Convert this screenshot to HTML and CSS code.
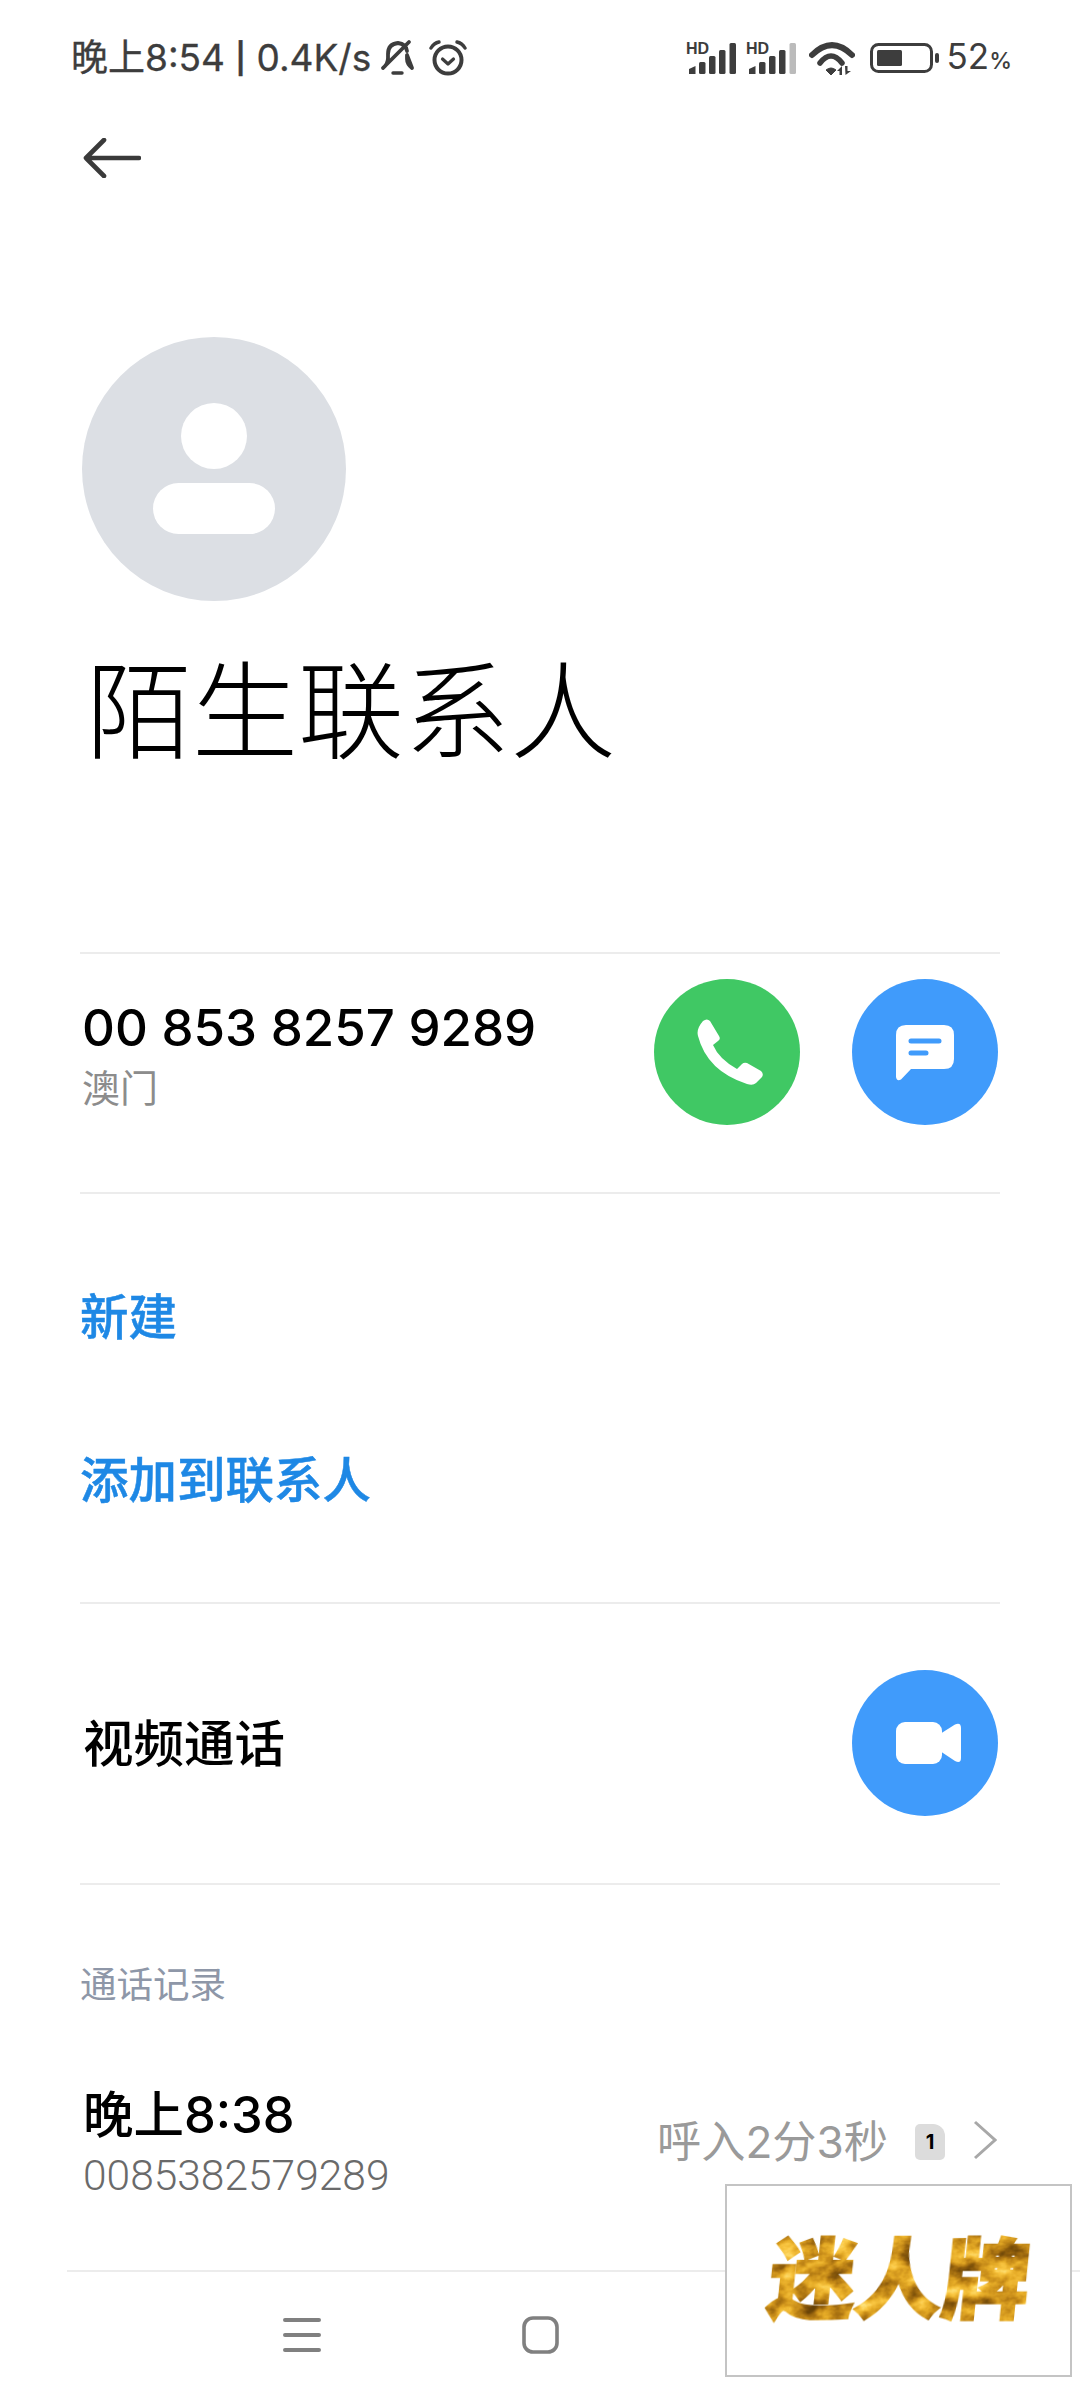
FILE: index.html
```html
<!DOCTYPE html>
<html lang="zh-CN">
<head>
<meta charset="utf-8">
<title>陌生联系人</title>
<link rel="stylesheet" href="styles.css">
</head>
<body>
<div class="screen">
  <header class="status">
    <div class="status-left">
      <span class="status-text">晚上8:54 <span class="sep">|</span> 0.4K/s</span>
      <svg class="ic-bell" viewBox="0 0 36 38"><path d="M4 29 Q9 25 9 19 L9 15 Q9 5 19 4 Q27 5 28 12 M28 16 L28 20 Q28 25 33 29 Z M4 29 L30 3" fill="none" stroke="#3d3d3d" stroke-width="3.8" stroke-linecap="round" stroke-linejoin="round"/><path d="M14 34 H23" stroke="#3d3d3d" stroke-width="3.4" stroke-linecap="round"/></svg>
      <svg class="ic-alarm" viewBox="0 0 38 36"><circle cx="19" cy="20" r="13.5" fill="none" stroke="#3d3d3d" stroke-width="4"/><path d="M13.5 19 L19 24 L24.5 19" fill="none" stroke="#3d3d3d" stroke-width="3.2" stroke-linecap="round" stroke-linejoin="round"/><path d="M2 8 Q5 3 10 2 M36 8 Q33 3 28 2" fill="none" stroke="#3d3d3d" stroke-width="3.4" stroke-linecap="round"/></svg>
    </div>
    <div class="status-right">
      <svg class="ic-signal" viewBox="0 0 50 32"><text x="0" y="12" class="hd">HD</text><path d="M3 27 L9.5 24 V32 H3 Z" fill="#3d3d3d"/><rect x="13" y="20" width="6.5" height="12" rx="1.5" fill="#3d3d3d"/><rect x="23" y="14" width="6.5" height="18" rx="1.5" fill="#3d3d3d"/><rect x="33" y="8" width="6.5" height="24" rx="1.5" fill="#3d3d3d"/><rect x="43.5" y="1" width="6.5" height="31" rx="1.5" fill="#3d3d3d"/></svg>
      <svg class="ic-signal" viewBox="0 0 50 32"><text x="0" y="12" class="hd">HD</text><path d="M3 27 L9.5 24 V32 H3 Z" fill="#3d3d3d"/><rect x="13" y="20" width="6.5" height="12" rx="1.5" fill="#3d3d3d"/><rect x="23" y="14" width="6.5" height="18" rx="1.5" fill="#3d3d3d"/><rect x="33" y="8" width="6.5" height="24" rx="1.5" fill="#3d3d3d"/><rect x="43.5" y="1" width="6.5" height="31" rx="1.5" fill="#bbbbbb"/></svg>
      <svg class="ic-wifi" viewBox="0 0 46 33"><path d="M3 13 Q23 -7 43 13" fill="none" stroke="#3d3d3d" stroke-width="6" stroke-linecap="round"/><path d="M11 21 Q22 7 33 21" fill="none" stroke="#3d3d3d" stroke-width="5.5" stroke-linecap="round"/><path d="M17 28 Q22 24 27 28 L22 33 Z" fill="#3d3d3d" stroke="#3d3d3d" stroke-linejoin="round"/><path d="M28 29 L33 24 V33 H30.5 V29 Z M36 24 H38.5 V29 H42 L36.5 33 Z" fill="#3d3d3d"/></svg>
      <svg class="ic-battery" viewBox="0 0 69 30"><rect x="1.5" y="1.5" width="60" height="27" rx="7" fill="none" stroke="#3d3d3d" stroke-width="3"/><rect x="7" y="7" width="25" height="16" rx="1.5" fill="#3d3d3d"/><rect x="65" y="10" width="4" height="10" rx="2" fill="#3d3d3d"/></svg>
      <span class="batt-text">52<span class="batt-pct">%</span></span>
    </div>
  </header>

  <main class="main">
    <div class="back-row">
      <svg class="ic-back" viewBox="0 0 58 40"><path d="M56 20 H3 M21 2 L3 20 L21 38" fill="none" stroke="#3a3a3a" stroke-width="4.6" stroke-linecap="round" stroke-linejoin="round"/></svg>
    </div>

    <section class="hero">
      <div class="avatar">
        <span class="avatar-head"></span>
        <span class="avatar-body"></span>
      </div>
      <h1 class="name">陌生联系人</h1>
    </section>

    <section class="contact">
      <div class="contact-info">
        <div class="number">00 853 8257 9289</div>
        <div class="region">澳门</div>
      </div>
      <div class="btns">
        <span class="circle green">
          <svg class="ic-phone" viewBox="0 0 66 66"><path d="M6 2 Q10 -1 13 2 L22 17 Q24 20 21 22 L16 26 Q22 40 40 50 L45 45 Q47 43 50 44 L64 52 Q67 55 65 58 L59 64 Q56 67 50 65 Q10 52 1 17 Q-1 10 6 2 Z" fill="#fff"/></svg>
        </span>
        <span class="circle blue">
          <svg class="ic-msg" viewBox="0 0 58 56"><path d="M10 0 H48 Q58 0 58 10 V34 Q58 44 48 44 H15 L5 54.5 Q1 57 0 52 V10 Q0 0 10 0 Z" fill="#fff"/><path d="M15 16 H43 M15 28 H30" stroke="#409bfb" stroke-width="5" stroke-linecap="round"/></svg>
        </span>
      </div>
    </section>

    <section class="actions">
      <div class="link">新建</div>
      <div class="link">添加到联系人</div>
    </section>

    <section class="video">
      <div class="video-label">视频通话</div>
      <span class="circle blue">
        <svg class="ic-video" viewBox="0 0 65 42"><rect width="46" height="42" rx="9" fill="#fff"/><path d="M44 12 L59 2.5 Q65 0 65 6 V36 Q65 42 59 39 L44 29 Z" fill="#fff"/></svg>
      </span>
    </section>

    <section class="history">
      <div class="history-title">通话记录</div>
      <div class="call">
        <div class="call-info">
          <div class="call-time">晚上8:38</div>
          <div class="call-num">0085382579289</div>
        </div>
        <div class="call-meta">
          <span class="call-desc">呼入2分3秒</span>
          <span class="sim">1</span>
          <svg class="ic-chevron" viewBox="0 0 24 40"><path d="M2 2 L22 20 L2 38" fill="none" stroke="#a8a8a8" stroke-width="3"/></svg>
        </div>
      </div>
    </section>
  </main>

  <nav class="nav">
    <span class="nav-item"><svg class="ic-menu" viewBox="0 0 38 36"><path d="M2 3 H36 M2 18 H36 M2 33 H36" stroke="#808080" stroke-width="4" stroke-linecap="round"/></svg></span>
    <span class="nav-item"><svg class="ic-home" viewBox="0 0 37 38"><rect x="2" y="2" width="33" height="34" rx="9" fill="none" stroke="#808080" stroke-width="3.6"/></svg></span>
  </nav>

  <aside class="watermark">
    <svg class="gold" viewBox="0 0 300 110">
      <defs>
        <filter id="goldfx" x="-5%" y="-5%" width="110%" height="110%" color-interpolation-filters="sRGB">
          <feTurbulence type="fractalNoise" baseFrequency="0.04 0.055" numOctaves="4" seed="11" result="n"/>
          <feColorMatrix in="n" type="matrix" values="1 0 0 0 0  1 0 0 0 0  1 0 0 0 0  0 0 0 0 1" result="g"/>
          <feComponentTransfer in="g" result="c">
            <feFuncR type="table" tableValues="0.38 0.42 0.58 0.76 0.90 0.98 1 1"/>
            <feFuncG type="table" tableValues="0.24 0.27 0.38 0.53 0.67 0.78 0.90 0.96"/>
            <feFuncB type="table" tableValues="0.02 0.03 0.05 0.09 0.15 0.26 0.50 0.70"/>
          </feComponentTransfer>
          <feComposite in="c" in2="SourceAlpha" operator="in"/>
        </filter>
      </defs>
      <g transform="translate(150 55) skewX(-6) translate(-150 -55)">
        <text x="20" y="87" class="gold-text" filter="url(#goldfx)">迷人牌</text>
      </g>
    </svg>
  </aside>
</div>
</body>
</html>
```
FILE: styles.css
```css
* { box-sizing: border-box; }
html, body { margin: 0; padding: 0; background: #fff; }
body { font-family: Inter, "Noto Sans CJK SC", sans-serif; color: #000; }
.screen { position: relative; width: 1080px; height: 2400px; overflow: hidden; background: #fff; }

.status { display: flex; justify-content: space-between; align-items: center; height: 116px; padding: 0 68px 0 71px; color: #3d3d3d; }
.status-left, .status-right { display: flex; align-items: center; }
.status-text { font-size: 37px; line-height: 44px; white-space: nowrap; -webkit-text-stroke: 0.3px #3d3d3d; }
.sep { font-size: 30px; font-weight: 600; vertical-align: 2px; }
.ic-bell { width: 38px; height: 38px; margin-left: 7px; }
.ic-alarm { width: 38px; height: 36px; margin-left: 13px; }
.ic-signal { width: 50px; height: 32px; margin-right: 10px; overflow: visible; }
.hd { font: 700 16px "Liberation Sans", sans-serif; fill: #3d3d3d; }
.ic-wifi { width: 46px; height: 33px; margin-left: 3px; }
.ic-battery { width: 69px; height: 30px; margin-left: 15px; }
.batt-text { font-size: 35px; line-height: 44px; margin-left: 8px; }
.batt-pct { font-size: 23px; font-weight: 500; }

.main { padding: 0 80px; }
.back-row { display: flex; align-items: center; height: 84px; padding-left: 3px; }
.ic-back { width: 58px; height: 40px; }

.hero { padding-top: 137px; border-bottom: 2px solid #ececec; }
.avatar { display: flex; flex-direction: column; align-items: center; width: 264px; height: 264px; margin-left: 2px; border-radius: 50%; background: #dcdfe4; padding-top: 66px; }
.avatar-head { width: 66px; height: 66px; border-radius: 50%; background: #fff; }
.avatar-body { width: 122px; height: 51px; margin-top: 14px; border-radius: 26px; background: #fff; }
.name { margin: 51px 0 180px; padding-left: 6px; font-size: 106px; line-height: 120px; font-weight: 300; color: #000; }

.contact { display: flex; justify-content: space-between; align-items: flex-start; height: 240px; padding: 25px 2px 0 2px; border-bottom: 2px solid #ececec; }
.contact-info { padding-top: 19px; }
.number { font-size: 51px; line-height: 60px; font-weight: 500; white-space: nowrap; }
.region { margin-top: 5px; font-size: 38px; line-height: 50px; color: #8c8c8c; }
.btns { display: flex; gap: 52px; }
.circle { display: flex; align-items: center; justify-content: center; flex: none; width: 146px; height: 146px; border-radius: 50%; }
.green { background: #40c864; }
.blue { background: #409bfb; }
.ic-phone { width: 66px; height: 66px; margin-left: 6px; }
.ic-msg { width: 58px; height: 56px; margin-top: 2px; }
.ic-video { width: 65px; height: 42px; margin-left: 6px; }

.actions { display: flex; flex-direction: column; gap: 99px; padding: 92px 0 89px; border-bottom: 2px solid #ececec; }
.link { font-size: 48.5px; line-height: 64px; font-weight: 500; color: #1e88e5; white-space: nowrap; -webkit-text-stroke: 0.5px #1e88e5; }

.video { display: flex; justify-content: space-between; align-items: center; padding: 66px 2px 67px 3px; border-bottom: 2px solid #ececec; }
.video-label { font-size: 50.5px; line-height: 64px; font-weight: 500; padding-top: 2px; }

.history { padding-top: 75px; }
.history-title { font-size: 36.5px; line-height: 50px; color: #8e97a8; }
.call { display: flex; justify-content: space-between; align-items: center; margin-top: 73px; padding: 0 3px 0 3px; }
.call-time { font-size: 50.5px; line-height: 64px; font-weight: 500; }
.call-num { margin-top: 4px; font-family: Roboto, "Noto Sans CJK SC", sans-serif; font-size: 42.5px; font-weight: 300; line-height: 50px; color: #6a6a6a; }
.call-meta { display: flex; align-items: center; }
.call-desc { font-size: 44.2px; line-height: 56px; color: #9a9a9a; }
.sim { display: flex; align-items: center; justify-content: center; width: 30px; height: 36px; margin-left: 27px; border-radius: 5px 12px 5px 5px; background: #dcdcdc; font-size: 20px; font-weight: 700; color: #000; }
.ic-chevron { width: 24px; height: 40px; margin-left: 28px; margin-top: -4px; }

.nav { display: grid; grid-template-columns: repeat(3, 238px); justify-content: center; align-items: center; position: absolute; left: 0; right: 0; bottom: 0; height: 130px; }
.nav::before { content: ""; position: absolute; left: 67px; right: 0; top: 0; border-top: 2px solid #ececec; }
.nav-item { display: flex; justify-content: center; }
.ic-menu { width: 38px; height: 36px; }
.ic-home { width: 37px; height: 38px; }

.watermark { position: absolute; left: 725px; top: 2184px; display: flex; align-items: center; justify-content: center; width: 347px; height: 193px; background: #fff; border: 2px solid #c4c4c4; }
.gold { width: 300px; height: 110px; margin-top: -2px; overflow: visible; }
.gold-text { font: 900 87px "Noto Sans CJK SC", sans-serif; stroke: #000; stroke-width: 2.5px; }
```
